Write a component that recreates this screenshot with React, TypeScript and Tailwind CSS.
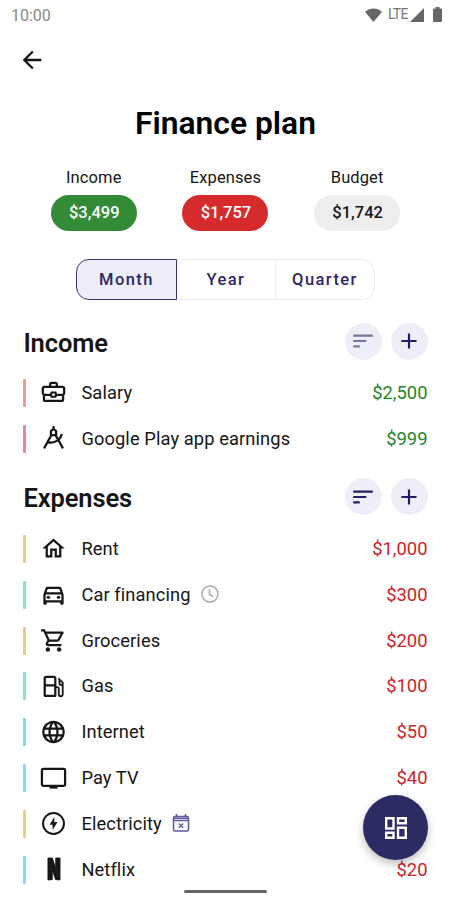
import type { ReactNode } from "react";
import {
    MdAdd,
    MdArrowBack,
    MdLanguage,
    MdOutlineDirectionsCar,
    MdOutlineHome,
    MdOutlineShoppingCart,
    MdSort,
} from "react-icons/md";
import { SiNetflix } from "react-icons/si";

type Item = {
    name: string;
    amount: string;
    bar: string;
    icon: ReactNode;
    badge?: ReactNode;
};

function BriefcaseIcon() {
    return (
        <svg viewBox="0 0 24 24" className="size-[27px]" fill="none" stroke="currentColor" strokeWidth="2" strokeLinejoin="round">
            <path d="M9 6.500V5a1.500 1.500 0 0 1 1.500-1.500h3A1.500 1.500 0 0 1 15 5v1.500" />
            <path d="M10 14H4a1.500 1.500 0 0 1-1.500-1.500V8.500a1.500 1.500 0 0 1 1.500-1.500h16a1.500 1.500 0 0 1 1.500 1.500v4A1.500 1.500 0 0 1 20 14h-6" />
            <path d="M3.500 14.500v3.700a1.300 1.300 0 0 0 1.300 1.300h14.400a1.300 1.300 0 0 0 1.300-1.300v-3.700" />
            <path d="M10 12h4v3.800h-4z" strokeWidth="1.700" />
        </svg>
    );
}

function CompassIcon() {
    return (
        <svg viewBox="0 0 24 24" className="size-[27px]" fill="none" stroke="currentColor" strokeWidth="2">
            <path d="M12 1v3" />
            <path d="M9.700 9V5.300L12 3.600l2.300 1.700V9z" strokeLinejoin="round" />
            <path d="M10.400 8.500 3.600 20.800M13.600 8.500l6.800 12.300" />
            <path d="M6.500 15.200c5.500 1.600 11.500-1.500 12.900-7.200" />
        </svg>
    );
}

function GasIcon() {
    return (
        <svg viewBox="0 0 24 24" className="size-[27px]" fill="none" stroke="currentColor" strokeWidth="2" strokeLinejoin="round">
            <path d="M4.200 20.300V4.700a1.300 1.300 0 0 1 1.300-1.300h6.800a1.300 1.300 0 0 1 1.300 1.300v15.600z" />
            <path d="M4.200 11H13.600" />
            <path d="M14 12.500h1.300a1.400 1.400 0 0 1 1.400 1.400v5a1.750 1.750 0 0 0 3.500 0V8.500L16.300 4.700" strokeWidth="1.600" />
            <path d="M17.300 6v3a1.500 1.500 0 0 0 1.500 1.500h1.400" strokeWidth="1.600" />
        </svg>
    );
}

function TvIcon() {
    return (
        <svg viewBox="0 0 24 24" className="size-[27px]" fill="none" stroke="currentColor" strokeWidth="2">
            <rect x="1.700" y="3.500" width="20.600" height="15" rx="1.200" />
            <path d="M8.500 20h7" />
        </svg>
    );
}

function BoltIcon() {
    return (
        <svg viewBox="0 0 24 24" className="size-[27px]">
            <circle cx="12" cy="12" r="9.300" fill="none" stroke="currentColor" strokeWidth="1.800" />
            <path d="M12.700 6.200 8.500 13.100h2.700v4.700l4.300-7.100h-2.800z" fill="currentColor" />
        </svg>
    );
}

function ClockIcon() {
    return (
        <svg viewBox="0 0 18 18" className="size-[18px] text-[#a8a8a8]" fill="none" stroke="currentColor" strokeWidth="1.500">
            <circle cx="9" cy="9" r="8" />
            <path d="M8.500 4.500v5l3.700 2.200" />
        </svg>
    );
}

function CalendarIcon() {
    return (
        <svg viewBox="0 0 18 18" className="size-[18px] text-[#5b58a0]" fill="none" stroke="currentColor" strokeWidth="1.500">
            <rect x="1.500" y="2.500" width="15" height="14.500" rx="1.500" />
            <path d="M1.500 4.200h15M1.500 6.500h15M4.500 0v3M13.500 0v3" />
            <path d="m6.700 9.500 4.600 4.200m0-4.200-4.600 4.200" strokeWidth="1.300" />
        </svg>
    );
}

function DashboardIcon() {
    return (
        <svg viewBox="0 0 22 22" className="size-[22px]" fill="none" stroke="currentColor" strokeWidth="2.400">
            <path d="M1.200 1.200h7.300v10.300H1.200zM13 1.200h7.800v5H13zM13 10.800h7.800v10H13zM1.200 15.800h7.300v5H1.200z" />
        </svg>
    );
}

const income: Item[] = [
    { name: "Salary", amount: "$2,500", bar: "bg-[#f29b86]", icon: <BriefcaseIcon /> },
    { name: "Google Play app earnings", amount: "$999", bar: "bg-[#ef82ac]", icon: <CompassIcon /> },
];

const expenses: Item[] = [
    { name: "Rent", amount: "$1,000", bar: "bg-[#f0c982]", icon: <MdOutlineHome className="size-[27px]" /> },
    { name: "Car financing", amount: "$300", bar: "bg-[#82e8c4]", icon: <MdOutlineDirectionsCar className="size-[27px]" />, badge: <ClockIcon /> },
    { name: "Groceries", amount: "$200", bar: "bg-[#f0c982]", icon: <MdOutlineShoppingCart className="size-[27px]" /> },
    { name: "Gas", amount: "$100", bar: "bg-[#82e8c4]", icon: <GasIcon /> },
    { name: "Internet", amount: "$50", bar: "bg-[#82d8ec]", icon: <MdLanguage className="size-[28px]" /> },
    { name: "Pay TV", amount: "$40", bar: "bg-[#82d8ec]", icon: <TvIcon /> },
    { name: "Electricity", amount: "", bar: "bg-[#f0c982]", icon: <BoltIcon />, badge: <CalendarIcon /> },
    { name: "Netflix", amount: "$20", bar: "bg-[#82d8ec]", icon: <SiNetflix className="mb-[2px] ml-[1px] size-[22px] overflow-visible stroke-current stroke-[0.9]" /> },
];

function Summary({ label, value, color }: { label: string; value: string; color: string }) {
    return (
        <div className="flex w-[131.700px] flex-col items-center">
            <span className="text-[16.500px] leading-5 tracking-[0.1px]">{label}</span>
            <span className={`mt-[7px] flex h-9 w-[86px] items-center justify-center rounded-full pl-[1px] text-[16.500px] font-medium ${color}`}>
                {value}
            </span>
        </div>
    );
}

function Section({ title, items, amountColor, sortColor }: { title: string; items: Item[]; amountColor: string; sortColor: string }) {
    return (
        <section>
            <div className="flex h-[38px] items-center justify-between">
                <h2 className="pt-[3px] text-[25.500px] font-semibold leading-8 tracking-[-0.1px]">{title}</h2>
                <div className="flex gap-[9px] text-[#241c64]">
                    <button className="flex size-[37px] items-center justify-center rounded-full bg-[#eeeef9]">
                        <MdSort className={`size-[26px] ${sortColor}`} />
                    </button>
                    <button className="flex size-[37px] items-center justify-center rounded-full bg-[#eeeef9]">
                        <MdAdd className="size-[26px]" />
                    </button>
                </div>
            </div>
            <ul className="mt-[10px]">
                {items.map((item) => (
                    <li key={item.name} className="flex h-[45.850px] items-center">
                        <span className={`h-7 w-[3px] rounded-[1px] ${item.bar}`} />
                        <span className="ml-[13.500px] flex w-[27px] justify-center">{item.icon}</span>
                        <span className="ml-[14.500px] text-[18.300px] leading-6 tracking-[0.1px]">{item.name}</span>
                        {item.badge && <span className="-mt-[2px] ml-[10px]">{item.badge}</span>}
                        <span className={`ml-auto text-[18.400px] leading-6 ${amountColor}`}>{item.amount}</span>
                    </li>
                ))}
            </ul>
        </section>
    );
}

export default function App() {
    return (
        <main className="relative flex h-[900px] w-[450px] flex-col overflow-hidden bg-white pl-[23.400px] pr-[22.500px] font-['Roboto',sans-serif] text-[#161616]">
            <header className="-ml-[23.400px] -mr-[22.500px] flex h-[29px] items-center justify-between pl-[11px] pr-[8px] text-[#666]">
                <span className="pt-[2px] text-[16px] text-[#888]">10:00</span>
                <div className="flex items-center">
                    <svg viewBox="0 0 17 14" className="h-[14px] w-[17px]" fill="currentColor">
                        <path d="M0 3.800C4.800-.7 12.200-.7 17 3.800L8.500 14z" />
                    </svg>
                    <span className="ml-[6px] w-[19px] text-[14px] tracking-[-0.8px] text-[#777]">LTE</span>
                    <svg viewBox="0 0 14 14" className="ml-[3px] size-[14px]" fill="currentColor">
                        <path d="M14 0v14H0z" />
                    </svg>
                    <svg viewBox="0 0 9 15" className="ml-[9px] h-[15px] w-[9px]" fill="currentColor">
                        <path d="M2.500 0h4v1.500H8a1 1 0 0 1 1 1V14a1 1 0 0 1-1 1H1a1 1 0 0 1-1-1V2.500a1 1 0 0 1 1-1h1.500z" />
                    </svg>
                </div>
            </header>
            <button className="-ml-[5px] mt-[17px] size-[28px]">
                <MdArrowBack className="size-[28px]" />
            </button>
            <h1 className="mt-[29px] text-center text-[31.800px] font-semibold leading-10 text-black">Finance plan</h1>
            <div className="mt-[25px] flex justify-center">
                <Summary label="Income" value="$3,499" color="bg-[#338b38] text-white" />
                <Summary label="Expenses" value="$1,757" color="bg-[#d62b2d] text-white" />
                <Summary label="Budget" value="$1,742" color="bg-[#eeeef0]" />
            </div>
            <div className="mx-auto mt-[28px] flex h-[41px] w-[299px] text-[16.500px] font-medium tracking-[1.400px] text-[#2d2766]">
                <button className="w-[101px] rounded-l-[13px] border-[1.500px] border-[#39346c] bg-[#eeeef9] pt-[2px]">Month</button>
                <button className="w-[98px] border-y border-[#ececf2] pt-[2px]">Year</button>
                <button className="w-[100px] rounded-r-[13px] border border-[#ececf2] pt-[2px]">Quarter</button>
            </div>
            <div className="mt-[22px]">
                <Section title="Income" items={income} amountColor="text-[#23862b]" sortColor="text-[#7774a0]" />
            </div>
            <div className="mt-[16.300px]">
                <Section title="Expenses" items={expenses} amountColor="text-[#cb2528]" sortColor="text-[#241c64]" />
            </div>
            <button className="absolute left-[363px] top-[795px] flex size-[65px] items-center justify-center rounded-full bg-[#2d2b63] text-white shadow-[0_4px_8px_rgba(0,0,0,0.25)]">
                <DashboardIcon />
            </button>
            <div className="absolute left-[184px] top-[890px] h-[3px] w-[83px] rounded-full bg-[#666]" />
        </main>
    );
}
